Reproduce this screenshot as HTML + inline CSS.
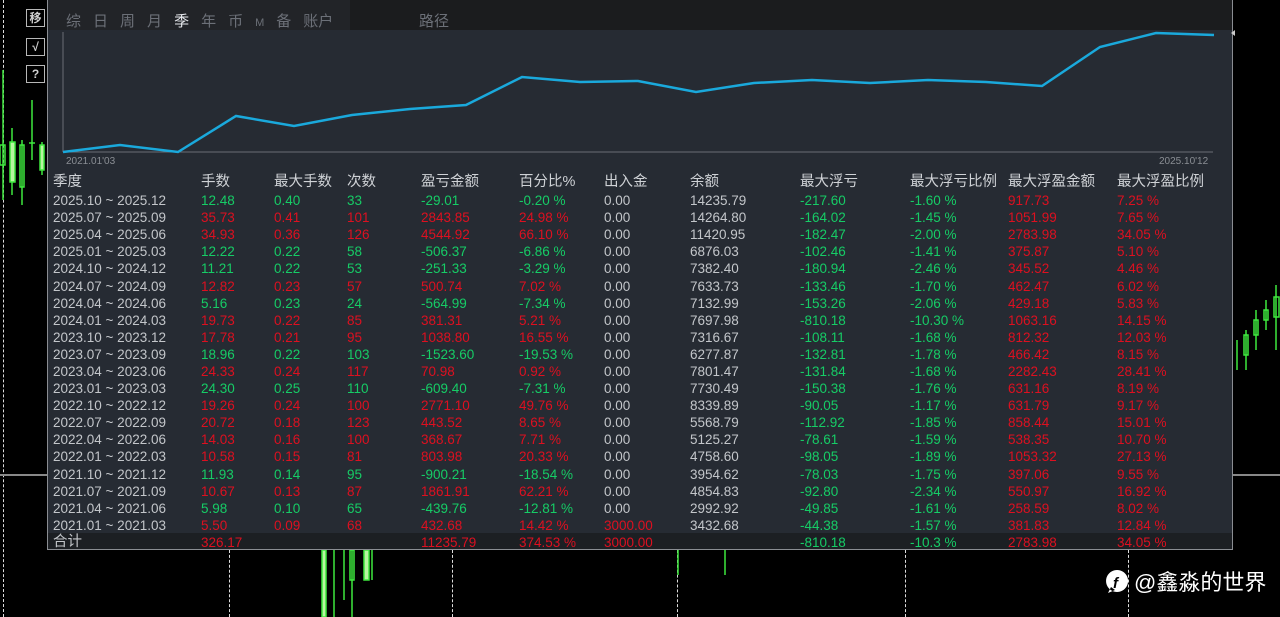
<!DOCTYPE html><html><head><meta charset="utf-8"><style>
body{margin:0;width:1280px;height:617px;background:#000;overflow:hidden;position:relative;font-family:"Liberation Sans","Noto Sans CJK SC",sans-serif}
.p{position:absolute}
.panel{left:47px;top:0;width:1186px;height:550px;background:#262b33;border:1px solid #8a8d92;border-top:none;box-sizing:border-box}
.top{left:48px;top:0;width:1184px;height:30px;background:#1b1c1e}
.tabs{left:66px;top:10px;font-size:15px;color:#6c7078;letter-spacing:0}
.tabs span{margin-right:12px}
.btn{left:26px;width:19px;height:18px;border:1px solid #b8b8b8;color:#d0d0d0;font-size:12px;text-align:center;line-height:17px;box-sizing:border-box;font-weight:bold}
table{position:absolute;left:53px;top:173px;border-collapse:collapse;font-size:13.5px}
td{padding:0;height:17.1px;line-height:17px;white-space:nowrap}
tr.h td{color:#cfd2d6;font-size:14.5px;height:19px}
.g{color:#16cc66}.r{color:#dd1020}.w{color:#c3c6ca}
.tot{left:48px;top:533px;width:1184px;height:16px;background:#1c1f23}
.vd{position:absolute;top:0;height:617px;border-left:1px dashed #ddd;width:0}
</style></head><body>
<div class="vd" style="left:3px"></div>
<div class="vd" style="left:229px;top:550px;height:67px"></div>
<div class="vd" style="left:452px;top:550px;height:67px"></div>
<div class="vd" style="left:677px;top:550px;height:67px"></div>
<div class="vd" style="left:905px;top:550px;height:67px"></div>
<div class="vd" style="left:1128px;top:550px;height:67px"></div>
<div class="p" style="left:0;top:474px;width:47px;height:2px;background:#888"></div>
<div class="p" style="left:1233px;top:474px;width:47px;height:2px;background:#888"></div>
<svg class="p" style="left:0;top:0" width="1280" height="617">
<g stroke="#3ee83e" fill="none" stroke-width="1.5">
<line x1="3" y1="70" x2="3" y2="200"/><rect x="0" y="145" width="5" height="20"/>
<line x1="12" y1="128" x2="12" y2="195"/><rect x="10" y="142" width="5" height="40" fill="#b8f5a0"/>
<line x1="22" y1="140" x2="22" y2="205"/><rect x="20" y="145" width="4" height="42"/>
<line x1="32" y1="100" x2="32" y2="160"/><line x1="29" y1="143" x2="35" y2="143"/>
<line x1="42" y1="142" x2="42" y2="175"/><rect x="40" y="145" width="4" height="25" fill="#b8f5a0"/>
<line x1="1276" y1="285" x2="1276" y2="350"/><rect x="1274" y="297" width="5" height="20"/>
<line x1="1266" y1="300" x2="1266" y2="330"/><rect x="1264" y="310" width="4" height="10"/>
<line x1="1256" y1="310" x2="1256" y2="350"/><rect x="1254" y="320" width="4" height="15"/>
<line x1="1246" y1="330" x2="1246" y2="370"/><rect x="1244" y="335" width="4" height="20"/>
<line x1="1237" y1="340" x2="1237" y2="370"/>
<line x1="324" y1="550" x2="324" y2="617"/><rect x="322" y="550" width="4" height="67" fill="#b8f5a0"/>
<line x1="334" y1="550" x2="334" y2="617"/><line x1="344" y1="550" x2="344" y2="600"/>
<line x1="352" y1="550" x2="352" y2="617"/><rect x="350" y="550" width="4" height="30"/>
<rect x="364" y="550" width="5" height="30" fill="#b8f5a0"/><line x1="372" y1="550" x2="372" y2="580"/>
<line x1="725" y1="550" x2="725" y2="575"/><line x1="678" y1="550" x2="678" y2="575"/>
</g></svg>
<div class="p btn" style="top:9px">移</div>
<div class="p btn" style="top:38px">√</div>
<div class="p btn" style="top:65px">?</div>
<div class="p panel"></div>
<div class="p top"></div>
<div class="p" style="left:48px;top:0;width:302px;height:30px;background:#222428"></div>
<div class="p tabs"><span>综</span><span>日</span><span>周</span><span>月</span><span style="color:#e8eaee">季</span><span>年</span><span>币</span><span style="font-size:11px">M</span><span>备</span><span>账户</span></div>
<div class="p tabs" style="left:419px">路径</div>
<svg class="p" style="left:0;top:0" width="1280" height="170">
<line x1="63" y1="32" x2="63" y2="152" stroke="#6a6e75"/>
<line x1="63" y1="152" x2="1213" y2="152" stroke="#6a6e75"/>
<polyline fill="none" stroke="#1aa9dc" stroke-width="2.5" points="63,152 120,145 178,152 236,116 294,126 352,115 410,109 466,105 522,77 580,82 638,81 696,92 754,83 812,80 870,83 928,80 986,82 1042,86 1100,47 1156,33 1214,35"/>
<text x="66" y="164" font-size="10" fill="#8a8e94" font-family="Liberation Sans">2021.01'03</text>
<text x="1159" y="164" font-size="10" fill="#8a8e94" font-family="Liberation Sans">2025.10'12</text>
<path d="M1235,30 l-4,3 4,3z" fill="#ccc"/>
</svg>
<div class="p tot"></div>
<table>
<colgroup><col style="width:148px"><col style="width:73px"><col style="width:73px"><col style="width:74px"><col style="width:98px"><col style="width:85px"><col style="width:86px"><col style="width:110px"><col style="width:110px"><col style="width:98px"><col style="width:109px"><col></colgroup>
<tr class="h"><td>季度</td><td>手数</td><td>最大手数</td><td>次数</td><td>盈亏金额</td><td>百分比%</td><td>出入金</td><td>余额</td><td>最大浮亏</td><td>最大浮亏比例</td><td>最大浮盈金额</td><td>最大浮盈比例</td></tr>
<tr><td class="w">2025.10 ~ 2025.12</td><td class="g">12.48</td><td class="g">0.40</td><td class="g">33</td><td class="g">-29.01</td><td class="g">-0.20 %</td><td class="w">0.00</td><td class="w">14235.79</td><td class="g">-217.60</td><td class="g">-1.60 %</td><td class="r">917.73</td><td class="r">7.25 %</td></tr>
<tr><td class="w">2025.07 ~ 2025.09</td><td class="r">35.73</td><td class="r">0.41</td><td class="r">101</td><td class="r">2843.85</td><td class="r">24.98 %</td><td class="w">0.00</td><td class="w">14264.80</td><td class="g">-164.02</td><td class="g">-1.45 %</td><td class="r">1051.99</td><td class="r">7.65 %</td></tr>
<tr><td class="w">2025.04 ~ 2025.06</td><td class="r">34.93</td><td class="r">0.36</td><td class="r">126</td><td class="r">4544.92</td><td class="r">66.10 %</td><td class="w">0.00</td><td class="w">11420.95</td><td class="g">-182.47</td><td class="g">-2.00 %</td><td class="r">2783.98</td><td class="r">34.05 %</td></tr>
<tr><td class="w">2025.01 ~ 2025.03</td><td class="g">12.22</td><td class="g">0.22</td><td class="g">58</td><td class="g">-506.37</td><td class="g">-6.86 %</td><td class="w">0.00</td><td class="w">6876.03</td><td class="g">-102.46</td><td class="g">-1.41 %</td><td class="r">375.87</td><td class="r">5.10 %</td></tr>
<tr><td class="w">2024.10 ~ 2024.12</td><td class="g">11.21</td><td class="g">0.22</td><td class="g">53</td><td class="g">-251.33</td><td class="g">-3.29 %</td><td class="w">0.00</td><td class="w">7382.40</td><td class="g">-180.94</td><td class="g">-2.46 %</td><td class="r">345.52</td><td class="r">4.46 %</td></tr>
<tr><td class="w">2024.07 ~ 2024.09</td><td class="r">12.82</td><td class="r">0.23</td><td class="r">57</td><td class="r">500.74</td><td class="r">7.02 %</td><td class="w">0.00</td><td class="w">7633.73</td><td class="g">-133.46</td><td class="g">-1.70 %</td><td class="r">462.47</td><td class="r">6.02 %</td></tr>
<tr><td class="w">2024.04 ~ 2024.06</td><td class="g">5.16</td><td class="g">0.23</td><td class="g">24</td><td class="g">-564.99</td><td class="g">-7.34 %</td><td class="w">0.00</td><td class="w">7132.99</td><td class="g">-153.26</td><td class="g">-2.06 %</td><td class="r">429.18</td><td class="r">5.83 %</td></tr>
<tr><td class="w">2024.01 ~ 2024.03</td><td class="r">19.73</td><td class="r">0.22</td><td class="r">85</td><td class="r">381.31</td><td class="r">5.21 %</td><td class="w">0.00</td><td class="w">7697.98</td><td class="g">-810.18</td><td class="g">-10.30 %</td><td class="r">1063.16</td><td class="r">14.15 %</td></tr>
<tr><td class="w">2023.10 ~ 2023.12</td><td class="r">17.78</td><td class="r">0.21</td><td class="r">95</td><td class="r">1038.80</td><td class="r">16.55 %</td><td class="w">0.00</td><td class="w">7316.67</td><td class="g">-108.11</td><td class="g">-1.68 %</td><td class="r">812.32</td><td class="r">12.03 %</td></tr>
<tr><td class="w">2023.07 ~ 2023.09</td><td class="g">18.96</td><td class="g">0.22</td><td class="g">103</td><td class="g">-1523.60</td><td class="g">-19.53 %</td><td class="w">0.00</td><td class="w">6277.87</td><td class="g">-132.81</td><td class="g">-1.78 %</td><td class="r">466.42</td><td class="r">8.15 %</td></tr>
<tr><td class="w">2023.04 ~ 2023.06</td><td class="r">24.33</td><td class="r">0.24</td><td class="r">117</td><td class="r">70.98</td><td class="r">0.92 %</td><td class="w">0.00</td><td class="w">7801.47</td><td class="g">-131.84</td><td class="g">-1.68 %</td><td class="r">2282.43</td><td class="r">28.41 %</td></tr>
<tr><td class="w">2023.01 ~ 2023.03</td><td class="g">24.30</td><td class="g">0.25</td><td class="g">110</td><td class="g">-609.40</td><td class="g">-7.31 %</td><td class="w">0.00</td><td class="w">7730.49</td><td class="g">-150.38</td><td class="g">-1.76 %</td><td class="r">631.16</td><td class="r">8.19 %</td></tr>
<tr><td class="w">2022.10 ~ 2022.12</td><td class="r">19.26</td><td class="r">0.24</td><td class="r">100</td><td class="r">2771.10</td><td class="r">49.76 %</td><td class="w">0.00</td><td class="w">8339.89</td><td class="g">-90.05</td><td class="g">-1.17 %</td><td class="r">631.79</td><td class="r">9.17 %</td></tr>
<tr><td class="w">2022.07 ~ 2022.09</td><td class="r">20.72</td><td class="r">0.18</td><td class="r">123</td><td class="r">443.52</td><td class="r">8.65 %</td><td class="w">0.00</td><td class="w">5568.79</td><td class="g">-112.92</td><td class="g">-1.85 %</td><td class="r">858.44</td><td class="r">15.01 %</td></tr>
<tr><td class="w">2022.04 ~ 2022.06</td><td class="r">14.03</td><td class="r">0.16</td><td class="r">100</td><td class="r">368.67</td><td class="r">7.71 %</td><td class="w">0.00</td><td class="w">5125.27</td><td class="g">-78.61</td><td class="g">-1.59 %</td><td class="r">538.35</td><td class="r">10.70 %</td></tr>
<tr><td class="w">2022.01 ~ 2022.03</td><td class="r">10.58</td><td class="r">0.15</td><td class="r">81</td><td class="r">803.98</td><td class="r">20.33 %</td><td class="w">0.00</td><td class="w">4758.60</td><td class="g">-98.05</td><td class="g">-1.89 %</td><td class="r">1053.32</td><td class="r">27.13 %</td></tr>
<tr><td class="w">2021.10 ~ 2021.12</td><td class="g">11.93</td><td class="g">0.14</td><td class="g">95</td><td class="g">-900.21</td><td class="g">-18.54 %</td><td class="w">0.00</td><td class="w">3954.62</td><td class="g">-78.03</td><td class="g">-1.75 %</td><td class="r">397.06</td><td class="r">9.55 %</td></tr>
<tr><td class="w">2021.07 ~ 2021.09</td><td class="r">10.67</td><td class="r">0.13</td><td class="r">87</td><td class="r">1861.91</td><td class="r">62.21 %</td><td class="w">0.00</td><td class="w">4854.83</td><td class="g">-92.80</td><td class="g">-2.34 %</td><td class="r">550.97</td><td class="r">16.92 %</td></tr>
<tr><td class="w">2021.04 ~ 2021.06</td><td class="g">5.98</td><td class="g">0.10</td><td class="g">65</td><td class="g">-439.76</td><td class="g">-12.81 %</td><td class="w">0.00</td><td class="w">2992.92</td><td class="g">-49.85</td><td class="g">-1.61 %</td><td class="r">258.59</td><td class="r">8.02 %</td></tr>
<tr><td class="w">2021.01 ~ 2021.03</td><td class="r">5.50</td><td class="r">0.09</td><td class="r">68</td><td class="r">432.68</td><td class="r">14.42 %</td><td class="r">3000.00</td><td class="w">3432.68</td><td class="g">-44.38</td><td class="g">-1.57 %</td><td class="r">381.83</td><td class="r">12.84 %</td></tr>
<tr><td class="w" style="font-size:14.5px">合计</td><td class="r">326.17</td><td></td><td></td><td class="r">11235.79</td><td class="r">374.53 %</td><td class="r">3000.00</td><td></td><td class="g">-810.18</td><td class="g">-10.3 %</td><td class="r">2783.98</td><td class="r">34.05 %</td></tr>
</table>
<svg class="p" style="left:1105px;top:569px" width="24" height="26"><path d="M12,1 a11,11 0 1 0 0.1,0z M3,24 l3,-6 4,3z" fill="#fff"/><text x="8" y="19" font-size="15" font-weight="bold" font-style="italic" fill="#000" font-family="Liberation Sans">f</text></svg>
<div class="p" style="left:1134px;top:565px;font-size:22px;color:#fff">@鑫淼的世界</div>
</body></html>
